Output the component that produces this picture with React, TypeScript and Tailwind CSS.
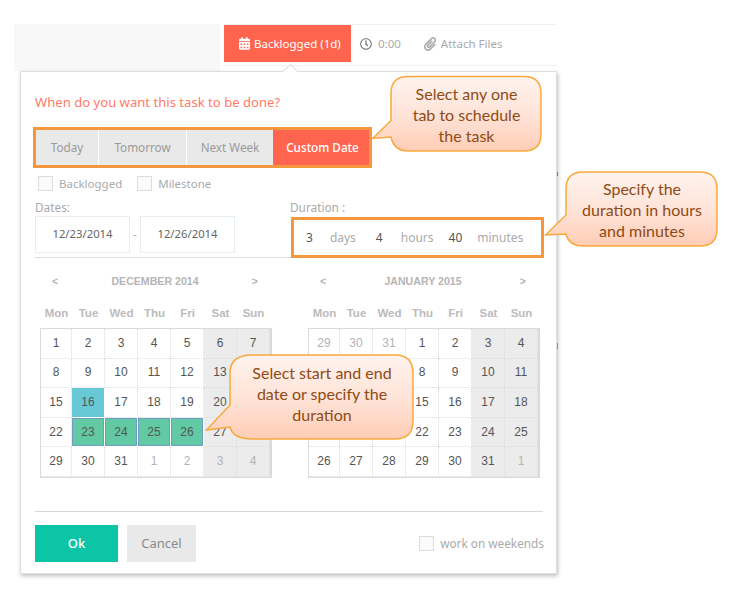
import { ReactNode } from "react";
import { FaCalendarAlt, FaPaperclip, FaRegClock } from "react-icons/fa";

type Day = { label: number; muted?: boolean; today?: boolean; picked?: boolean };

const weekdays = ["Mon", "Tue", "Wed", "Thu", "Fri", "Sat", "Sun"];

const december: Day[] = [
  ...Array.from({ length: 31 }, (_, i) => ({
    label: i + 1,
    today: i + 1 === 16,
    picked: i + 1 >= 23 && i + 1 <= 26,
  })),
  ...[1, 2, 3, 4].map((label) => ({ label, muted: true })),
];

const january: Day[] = [
  ...[29, 30, 31].map((label) => ({ label, muted: true })),
  ...Array.from({ length: 31 }, (_, i) => ({ label: i + 1 })),
  { label: 1, muted: true },
];

function Checkbox() {
  return <span className="block w-[15px] h-[15px] border border-[#dcdcdc] bg-[#fbfbfb]" />;
}

function dayTone(day: Day, weekend: boolean) {
  if (day.today) return "mr-px mb-px bg-[#67c9d6]";
  if (day.picked) return "mr-px mb-px border border-[#6f9fc0] bg-[#62c9a5]";
  const fill = weekend ? "bg-[#ececec]" : "bg-white";
  return `border-r border-b border-dotted border-[#dcdcdc] ${fill}`;
}

function Calendar(props: { title: string; days: Day[] }) {
  return (
    <div className="w-[232px] font-['Liberation_Sans',sans-serif]">
      <div className="flex items-center justify-between h-[16px] pl-[12px] pr-[14px] text-[10.6px] font-bold text-[#b5b5b5]">
        <span>&lt;</span>
        <span>{props.title}</span>
        <span>&gt;</span>
      </div>
      <div className="grid grid-cols-[31px_repeat(6,33px)] mt-[15px] h-[16px] pl-px text-[11.5px] leading-[16px] font-bold text-center text-[#bbbbbb]">
        {weekdays.map((day) => (
          <span key={day}>{day}</span>
        ))}
      </div>
      <div className="grid grid-cols-[31px_repeat(6,33px)] auto-rows-[29.6px] mt-[7px] border-y border-l border-r-2 border-[#dadada] text-[12px] text-center">
        {props.days.map((day, index) => (
          <div
            key={index}
            className={`flex items-center justify-center pb-px ${dayTone(day, index % 7 >= 5)} ${
              day.muted ? "text-[#b4b4b4]" : "text-[#555555]"
            }`}
          >
            {day.label}
          </div>
        ))}
      </div>
    </div>
  );
}

function Callout(props: {
  className: string;
  width: number;
  height: number;
  path: string;
  gradient: string;
  textClass: string;
  children: ReactNode;
}) {
  return (
    <div className={`absolute ${props.className}`}>
      <svg width={props.width} height={props.height} className="block">
        <defs>
          <linearGradient id={props.gradient} x1="0" y1="0" x2="0" y2="1">
            <stop offset="0" stopColor="#fff3ee" />
            <stop offset="0.55" stopColor="#ffe2d6" />
            <stop offset="1" stopColor="#ffcdb5" />
          </linearGradient>
        </defs>
        <path d={props.path} fill={`url(#${props.gradient})`} stroke="#f9a93c" strokeWidth="1.5" />
      </svg>
      <div
        className={`absolute flex flex-col justify-center text-center font-['Lato',sans-serif] text-[16px] leading-[21px] text-[#8f4a14] ${props.textClass}`}
      >
        {props.children}
      </div>
    </div>
  );
}

export default function App() {
  return (
    <div className="relative w-[755px] h-[600px] overflow-hidden bg-white font-['Noto_Sans',sans-serif]">
      <div className="flex items-start pt-[24px] pl-[14px]">
        <div className="w-[206px] h-[47px] bg-[#f8f8f8]" />
        <div className="flex items-start w-[333px] h-[42px] ml-[4px] border-y border-[#f0f0f0] text-[11.5px] text-[#aaaaaa]">
          <div className="flex items-center w-[127px] h-[37px] pl-[15px] bg-[#ff654e] text-white">
            <FaCalendarAlt className="w-[11px] h-[13px] mr-[4px]" />
            Backlogged (1d)
          </div>
          <div className="flex items-center h-[37px] ml-[9px]">
            <FaRegClock className="w-[12px] h-[12px] mr-[6px] text-[#777777]" />
            0:00
          </div>
          <div className="flex items-center h-[37px] ml-[22px]">
            <FaPaperclip className="w-[14px] h-[14px] mr-[4px] text-[#b0b0b0]" />
            Attach Files
          </div>
        </div>
      </div>

      <div className="relative ml-[20px] w-[537px] h-[503px] border border-[#dedede] bg-white pt-[20px] pl-[14px] shadow-[1px_2px_4px_rgba(0,0,0,0.25)]">
        <span className="absolute top-[-6px] left-[264px] w-[11px] h-[11px] rotate-45 border-l border-t border-[#dedede] bg-white" />
        <span className="absolute top-[100px] right-[-2px] w-px h-[4px] bg-[#777777]" />
        <span className="absolute top-[271px] right-[-2px] w-px h-[6px] bg-[#2fc4ad]" />

        <h2 className="h-[20px] mb-[15px] text-[13.1px] leading-[20px] font-normal text-[#ff7a68]">
          When do you want this task to be done?
        </h2>

        <div className="flex w-[339px] h-[41px] ml-[-2px] border-3 border-[#f5973e] text-[11.7px] text-[#9a9a9a]">
          <div className="flex items-center justify-center w-[62px] bg-[#e9e9e9]">Today</div>
          <div className="flex items-center justify-center w-[87px] ml-px bg-[#e9e9e9]">Tomorrow</div>
          <div className="flex items-center justify-center w-[86px] ml-px bg-[#e9e9e9]">Next Week</div>
          <div className="flex items-center justify-center w-[96px] pl-[3px] bg-[#ff654e] font-medium text-white">
            Custom Date
          </div>
        </div>

        <div className="flex items-center h-[15px] mt-[8px] ml-[3px] text-[11.5px] text-[#aaaaaa]">
          <Checkbox />
          <span className="ml-[6px] pt-px">Backlogged</span>
          <span className="ml-[15px]">
            <Checkbox />
          </span>
          <span className="ml-[6px] pt-px">Milestone</span>
        </div>

        <div className="flex mt-[8px]">
          <div className="w-[256px] h-[59px] border-b border-[#dddddd]">
            <div className="h-[17px] text-[11.8px] leading-[16px] text-[#aaaaaa]">Dates:</div>
            <div className="flex items-center text-[11.3px] text-[#666666]">
              <div className="flex items-center justify-center w-[95px] h-[37px] border border-[#e6eeee]">
                12/23/2014
              </div>
              <span className="w-[10px] text-center text-[#aaaaaa]">-</span>
              <div className="flex items-center justify-center w-[95px] h-[37px] border border-[#e6eeee]">
                12/26/2014
              </div>
            </div>
          </div>
          <div className="w-[253px]">
            <div className="h-[18px] ml-[-1px] text-[11.8px] leading-[16px] text-[#aaaaaa]">Duration :</div>
            <div className="flex items-center h-[41px] border-3 border-[#f5973e] pl-[12px] text-[12px] text-[#555555]">
              <span>3</span>
              <span className="ml-[17px] text-[#aaaaaa]">days</span>
              <span className="ml-[20px]">4</span>
              <span className="ml-[18px] text-[#aaaaaa]">hours</span>
              <span className="ml-[15px]">40</span>
              <span className="ml-[15px] text-[#aaaaaa]">minutes</span>
            </div>
          </div>
        </div>

        <div className="flex gap-[36px] mt-[16px] ml-[5px]">
          <Calendar title="DECEMBER 2014" days={december} />
          <Calendar title="JANUARY 2015" days={january} />
        </div>

        <div className="w-[508px] h-px mt-[33px] bg-[#d8d8d8]" />

        <div className="flex items-center w-[509px] h-[37px] mt-[13px] text-[13px]">
          <div className="flex items-center justify-center w-[83px] h-[37px] bg-[#0cc4a6] font-medium text-white">
            Ok
          </div>
          <div className="flex items-center justify-center w-[69px] h-[37px] ml-[9px] bg-[#e9e9e9] text-[#8a8a8a]">
            Cancel
          </div>
          <div className="flex items-center ml-auto text-[11.8px] text-[#aaaaaa]">
            <Checkbox />
            <span className="ml-[6px]">work on weekends</span>
          </div>
        </div>
      </div>

      <Callout
        className="left-[371px] top-[75px]"
        width={172}
        height={78}
        gradient="tabsFill"
        path="M37 1.5H153Q170 1.5 170 18.5V59Q170 76 153 76H37Q23 76 20 62L1.5 63.5L20 45.5V18.5Q20 1.5 37 1.5Z"
        textClass="top-0 left-[20px] w-[151px] h-[78px]"
      >
        <span>Select any one</span>
        <span>tab to schedule</span>
        <span>the task</span>
      </Callout>

      <Callout
        className="left-[544px] top-[171px]"
        width={175}
        height={77}
        gradient="durationFill"
        path="M39 1H156Q173 1 173 18V58Q173 75 156 75H39Q25 75 22 63L1.5 64L22 44V18Q22 1 39 1Z"
        textClass="top-0 left-[22px] w-[152px] h-[77px]"
      >
        <span>Specify the</span>
        <span>duration in hours</span>
        <span>and minutes</span>
      </Callout>

      <Callout
        className="left-[205px] top-[354px]"
        width={210}
        height={87}
        gradient="rangeFill"
        path="M47 1H190Q208 1 208 19V67Q208 85 190 85H47Q28 85 25 73L1.5 76L25 51V19Q25 1 47 1Z"
        textClass="top-[-4px] left-[25px] w-[184px] h-[87px]"
      >
        <span>Select start and end</span>
        <span>date or specify the</span>
        <span>duration</span>
      </Callout>
    </div>
  );
}
